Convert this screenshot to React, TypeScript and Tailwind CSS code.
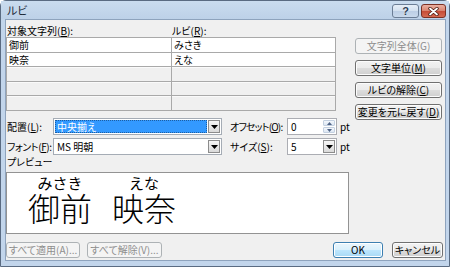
import React from "react";

const U = ({ children }: { children: React.ReactNode }) => (
  <span className="underline underline-offset-[1px]">{children}</span>
);

type Kind = "normal" | "primary" | "disabled";

function Btn({ children, kind = "normal", className = "" }: { children: React.ReactNode; kind?: Kind; className?: string }) {
  const styles: Record<Kind, string> = {
    normal:
      "border-[#707070] bg-[linear-gradient(#f2f2f2_0%,#ebebeb_50%,#dddddd_50%,#cfcfcf_100%)] shadow-[inset_0_0_0_1px_#fcfcfc] text-black",
    primary:
      "border-[#3c7fb1] bg-[linear-gradient(#eaf6fd_0%,#d9f0fc_50%,#bee6fd_50%,#a7d9f5_100%)] shadow-[inset_0_0_0_1px_#ffffff] text-black",
    disabled: "border-[#adb2b5] bg-[#f4f4f4] text-[#8d8d8d]",
  };
  return (
    <div
      className={`flex h-[16px] items-center justify-center whitespace-nowrap rounded-[3px] border leading-none ${styles[kind]} ${className}`}
    >
      {children}
    </div>
  );
}

function DropArrow() {
  return (
    <div className="flex w-[12px] items-center justify-center border border-[#8c8c8c] bg-[linear-gradient(#f6f6f6,#dadada)]">
      <svg width="7" height="4" viewBox="0 0 7 4">
        <path d="M0 0H7L3.5 4Z" fill="#000" />
      </svg>
    </div>
  );
}

function Spinner() {
  return (
    <div className="flex w-[12px] flex-col gap-px">
      <div className="flex flex-1 items-center justify-center rounded-[1px] border border-[#c3d0e0] bg-[linear-gradient(#f3f7fc,#dde7f3)]">
        <svg width="5" height="3" viewBox="0 0 5 3">
          <path d="M0 3H5L2.5 0Z" fill="#4e6386" />
        </svg>
      </div>
      <div className="flex flex-1 items-center justify-center rounded-[1px] border border-[#c3d0e0] bg-[linear-gradient(#f3f7fc,#dde7f3)]">
        <svg width="5" height="3" viewBox="0 0 5 3">
          <path d="M0 0H5L2.5 3Z" fill="#4e6386" />
        </svg>
      </div>
    </div>
  );
}

const cells = [
  ["御前", "みさき"],
  ["映奈", "えな"],
  ["", ""],
  ["", ""],
  ["", ""],
];

const preview = [
  { base: "御前", ruby: "みさき" },
  { base: "映奈", ruby: "えな" },
];

export default function App() {
  return (
    <div className="h-[267px] w-[450px] overflow-hidden bg-white font-['Noto_Sans_CJK_JP',sans-serif] text-[10px] text-black [font-feature-settings:'palt']">
      <div className="flex h-[267px] w-[450px] flex-col rounded-t-[6px] border border-[#5a6b82] bg-[#c2d5eb]">
        {/* Title bar */}
        <div className="flex h-[18px] items-start justify-between bg-[linear-gradient(#cadcef,#bdd1e8)] pl-[6px] pr-[3px]">
          <span className="mt-[2px] text-[11px] leading-[14px] text-[#1e2a38]">ルビ</span>
          <div className="mt-[3px] flex gap-[2px]">
            <div className="flex h-[14px] w-[27px] items-center justify-center rounded-[3px] border border-[#6b7d95] bg-[linear-gradient(#e6eef8_0%,#d3e0ef_50%,#bccee5_50%,#c9d9ec_100%)]">
              <span className="font-['Liberation_Sans',sans-serif] text-[11px] font-bold leading-none text-[#2a3c54] [text-shadow:0_0_1px_#fff]">
                ?
              </span>
            </div>
            <div className="flex h-[14px] w-[25px] items-center justify-center rounded-[3px] border border-[#7b3024] bg-[linear-gradient(#eab0a2_0%,#d9826e_50%,#c54b36_50%,#d56a52_100%)]">
              <svg width="11" height="9" viewBox="0 0 11 9">
                <path d="M2 1.5L9 7.5M9 1.5L2 7.5" stroke="#4a1a12" strokeWidth="3.4" strokeLinecap="round" />
                <path d="M2 1.5L9 7.5M9 1.5L2 7.5" stroke="#fff" strokeWidth="1.8" strokeLinecap="round" />
              </svg>
            </div>
          </div>
        </div>

        {/* Client area */}
        <div className="mb-[5px] ml-[4px] mr-[3px] flex flex-1 flex-col border border-[#8ea3bd] bg-[#f0f0f0]">
          <div className="flex">
            {/* Left column */}
            <div className="flex w-[349px] flex-col">
              <div className="mt-[5px] flex h-[12px] items-center whitespace-nowrap leading-[12px]">
                <span className="w-[166px] pl-[1px]">
                  対象文字列(<U>B</U>):
                </span>
                <span>
                  ルビ(<U>R</U>):
                </span>
              </div>
              <div className="grid w-[330px] grid-cols-[164px_163px] grid-rows-[14px_13px_14px_13px_14px] gap-px bg-[#a9a9a9] p-px">
                {cells.flatMap((row, r) =>
                  row.map((txt, c) => (
                    <div
                      key={`${r}-${c}`}
                      className={`flex items-center pl-[2px] leading-none ${r < 2 ? "bg-white" : "bg-[#f0f0f0] shadow-[inset_0_1px_0_#fafafa]"}`}
                    >
                      {txt}
                    </div>
                  ))
                )}
              </div>

              {/* Alignment / offset */}
              <div className="mt-[7px] flex h-[17px] items-center whitespace-nowrap">
                <span className="w-[47px] shrink-0 pl-[1px]">
                  配置(<U>L</U>):
                </span>
                <div className="flex h-[17px] w-[169px] shrink-0 gap-px border border-[#a5acb5] bg-white p-px">
                  <div className="flex flex-1 items-center bg-[#3399ff] pl-[2px] leading-none text-white outline-1 outline-dotted outline-[#1c5ea3] -outline-offset-1">
                    中央揃え
                  </div>
                  <DropArrow />
                </div>
                <span className="ml-[8px] w-[57px] shrink-0 tracking-[-0.8px]">
                  オフセット(<U>O</U>):
                </span>
                <div className="flex h-[17px] w-[50px] shrink-0 gap-px border border-[#abadb3] bg-white p-px">
                  <div className="flex flex-1 items-center pl-[2px] leading-none">0</div>
                  <Spinner />
                </div>
                <span className="ml-[3px]">pt</span>
              </div>

              {/* Font / size */}
              <div className="mt-[3px] flex h-[17px] items-center whitespace-nowrap">
                <span className="w-[47px] shrink-0 pl-[1px] tracking-[-0.4px]">
                  フォント(<U>F</U>):
                </span>
                <div className="flex h-[17px] w-[169px] shrink-0 gap-px border border-[#a5acb5] bg-white p-px">
                  <div className="flex flex-1 items-center pl-[2px] leading-none">MS 明朝</div>
                  <DropArrow />
                </div>
                <span className="ml-[8px] w-[57px] shrink-0">
                  サイズ(<U>S</U>):
                </span>
                <div className="flex h-[17px] w-[50px] shrink-0 gap-px border border-[#abadb3] bg-white p-px">
                  <div className="flex flex-1 items-center pl-[2px] leading-none">5</div>
                  <DropArrow />
                </div>
                <span className="ml-[3px]">pt</span>
              </div>

              <div className="mt-[1px] h-[12px] pl-[1px] leading-[12px]">プレビュー</div>
              <div className="mt-[4px] flex h-[62px] w-[343px] items-start gap-[20px] border border-[#939393] bg-white pl-[21px] pt-px [font-feature-settings:normal]">
                {preview.map((p) => (
                  <div key={p.base} className="flex flex-col items-center">
                    <span className="text-[15px] leading-[17px]">{p.ruby}</span>
                    <span className="text-[32px] font-light leading-[32px]">{p.base}</span>
                  </div>
                ))}
              </div>
            </div>

            {/* Right column */}
            <div className="flex w-[87px] flex-col gap-[6px] pt-[18px]">
              <Btn kind="disabled">文字列全体(G)</Btn>
              <Btn>
                文字単位(<U>M</U>)
              </Btn>
              <Btn>
                ルビの解除(<U>C</U>)
              </Btn>
              <Btn>
                変更を元に戻す(<U>D</U>)
              </Btn>
            </div>
          </div>

          {/* Bottom buttons */}
          <div className="mt-[8px] flex pr-[2px]">
            <Btn kind="disabled" className="w-[74px]">
              すべて適用(A)...
            </Btn>
            <Btn kind="disabled" className="ml-[7px] w-[75px]">
              すべて解除(V)...
            </Btn>
            <Btn kind="primary" className="ml-auto w-[50px]">
              OK
            </Btn>
            <Btn className="ml-[9px] w-[51px]">キャンセル</Btn>
          </div>
        </div>
      </div>
    </div>
  );
}
